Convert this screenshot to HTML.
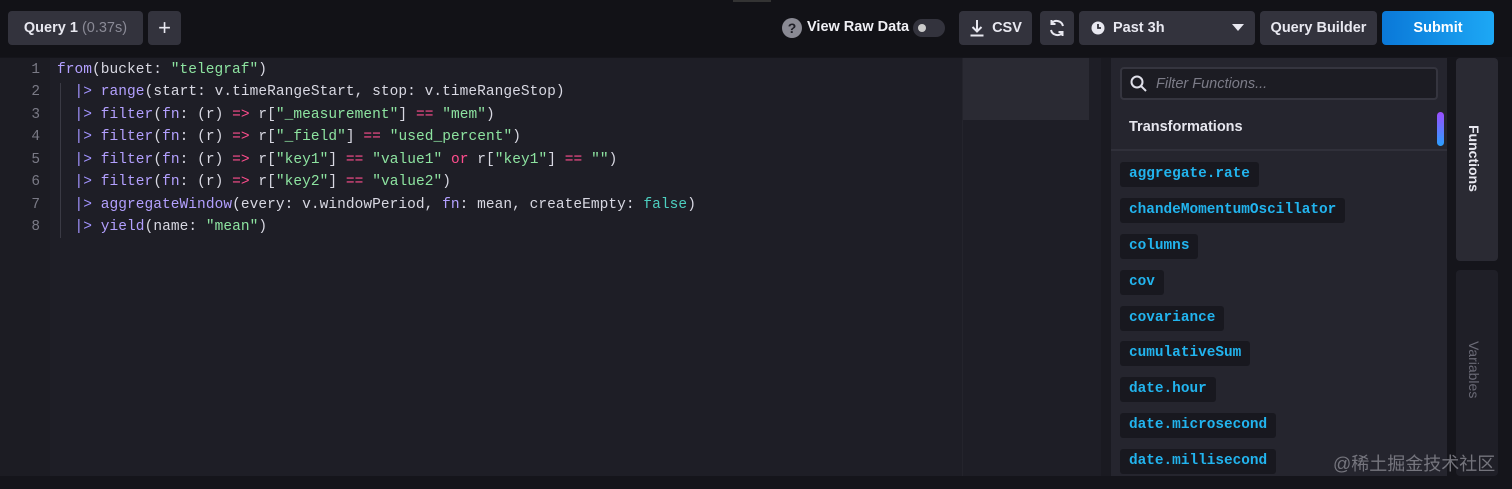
<!DOCTYPE html>
<html><head><meta charset="utf-8"><style>
*{margin:0;padding:0;box-sizing:border-box}
body{width:1512px;height:489px;background:#15151b;font-family:"Liberation Sans",sans-serif;position:relative;overflow:hidden;color:#e0e0ea}
.abs{position:absolute}
.btn{position:absolute;top:11px;height:34px;background:#33333d;border-radius:4px;color:#e8e8f0;font-size:14.5px;font-weight:bold;display:flex;align-items:center;justify-content:center}
.code{position:absolute;left:0;top:58px;width:1101px;height:418px;background:#1e1e26}
.gut{position:absolute;left:0;top:0;width:50px;height:418px;background:#1c1c23}
.ln{position:absolute;left:0;width:40px;text-align:right;font:14.4px "Liberation Mono",monospace;color:#7a7a86}
.cl{position:absolute;left:57px;font:14.5px "Liberation Mono",monospace;color:#d8d8e2;white-space:pre;letter-spacing:0.05px}
.f{color:#b3a0ff}.s{color:#8de3a0}.o{color:#ff4d8d}.p{color:#a293ff}.b{color:#4dd0c0}
.chip{position:absolute;left:1120px;height:25px;background:#18181f;border-radius:3px;padding:0 9px;font:bold 14.4px "Liberation Mono",monospace;color:#22b4ee;line-height:25px}
</style></head><body>
<div class="abs" style="left:0;top:0;width:1512px;height:57px;background:#121217"></div>
<div class="abs" style="left:733px;top:0;width:38px;height:2px;background:#333"></div>
<div class="btn" style="left:8px;width:135px;top:11px;font-weight:bold">Query 1&nbsp;<span style="color:#8a8a96;font-weight:normal">(0.37s)</span></div>
<div class="btn" style="left:148px;width:33px;font-size:22px;font-weight:normal">+</div>
<div class="abs" style="left:782px;top:18px;width:20px;height:20px;border-radius:50%;background:#8a8a94;color:#1e1e26;font-weight:bold;font-size:14px;text-align:center;line-height:20px">?</div>
<div class="abs" style="left:807px;top:19px;font-size:14.5px;font-weight:bold;color:#f0f0f5">View Raw Data</div>
<div class="abs" style="left:913px;top:19px;width:32px;height:18px;border-radius:9px;background:#33333d"><div style="position:absolute;left:5px;top:5px;width:8px;height:8px;border-radius:50%;background:#ccc"></div></div>
<div class="btn" style="left:959px;width:73px"><svg width="16" height="18" viewBox="0 0 16 18" style="margin-right:7px"><path d="M8 1v11M3.5 8l4.5 4.5 4.5-4.5M1.5 16.5h13" stroke="#e8e8f0" stroke-width="2" fill="none"/></svg>CSV</div>
<div class="btn" style="left:1040px;width:34px"><svg width="20" height="20" viewBox="0 0 20 20"><path d="M16 8A6.5 6.5 0 0 0 4.5 5.5M4 12a6.5 6.5 0 0 0 11.5 2.5M4.5 2v4h4M15.5 18v-4h-4" stroke="#e8e8f0" stroke-width="2" fill="none"/></svg></div>
<div class="btn" style="left:1079px;width:176px;justify-content:flex-start;padding-left:12px"><svg width="14" height="14" viewBox="0 0 14 14" style="margin-right:8px"><circle cx="7" cy="7" r="6.5" fill="#e8e8f0"/><path d="M7 3v4h3" stroke="#33333d" stroke-width="1.8" fill="none"/></svg>Past 3h<svg class="abs" style="left:153px;top:13px" width="12" height="8"><path d="M0 0h12L6 7z" fill="#e8e8f0"/></svg></div>
<div class="btn" style="left:1260px;width:117px">Query Builder</div>
<div class="btn" style="left:1382px;width:112px;background:linear-gradient(90deg,#0a78d8,#1da8f5);color:#fff">Submit</div>

<div class="code"><div class="gut"></div>
<div class="abs" style="top:25px;width:1px;height:155px;background:#3a3a44;left:60px"></div>
<div class="abs" style="left:962px;top:0;width:1px;height:418px;background:#24242c"></div>
<div class="abs" style="left:963px;top:0;width:126px;height:62px;background:#2a2a33"></div>
</div>
<div class="ln" style="top:62px">1</div><div class="ln" style="top:84px">2</div><div class="ln" style="top:107px">3</div><div class="ln" style="top:129px">4</div><div class="ln" style="top:152px">5</div><div class="ln" style="top:174px">6</div><div class="ln" style="top:197px">7</div><div class="ln" style="top:219px">8</div>
<div class="cl" style="top:62px"><span class="f">from</span>(bucket: <span class="s">"telegraf"</span>)</div>
<div class="cl" style="top:84px">  <span class="p">|&gt;</span> <span class="f">range</span>(start: v.timeRangeStart, stop: v.timeRangeStop)</div>
<div class="cl" style="top:107px">  <span class="p">|&gt;</span> <span class="f">filter</span>(<span class="f">fn</span>: (r) <span class="o">=&gt;</span> r[<span class="s">"_measurement"</span>] <span class="o">==</span> <span class="s">"mem"</span>)</div>
<div class="cl" style="top:129px">  <span class="p">|&gt;</span> <span class="f">filter</span>(<span class="f">fn</span>: (r) <span class="o">=&gt;</span> r[<span class="s">"_field"</span>] <span class="o">==</span> <span class="s">"used_percent"</span>)</div>
<div class="cl" style="top:152px">  <span class="p">|&gt;</span> <span class="f">filter</span>(<span class="f">fn</span>: (r) <span class="o">=&gt;</span> r[<span class="s">"key1"</span>] <span class="o">==</span> <span class="s">"value1"</span> <span class="o">or</span> r[<span class="s">"key1"</span>] <span class="o">==</span> <span class="s">""</span>)</div>
<div class="cl" style="top:174px">  <span class="p">|&gt;</span> <span class="f">filter</span>(<span class="f">fn</span>: (r) <span class="o">=&gt;</span> r[<span class="s">"key2"</span>] <span class="o">==</span> <span class="s">"value2"</span>)</div>
<div class="cl" style="top:197px">  <span class="p">|&gt;</span> <span class="f">aggregateWindow</span>(every: v.windowPeriod, <span class="f">fn</span>: mean, createEmpty: <span class="b">false</span>)</div>
<div class="cl" style="top:219px">  <span class="p">|&gt;</span> <span class="f">yield</span>(name: <span class="s">"mean"</span>)</div>

<div class="abs" style="left:1101px;top:58px;width:10px;height:418px;background:#1a1a21"></div>
<div class="abs" style="left:1111px;top:58px;width:336px;height:418px;background:#25252e"></div>
<div class="abs" style="left:1120px;top:67px;width:318px;height:33px;background:#1c1c23;border:2px solid #35353f;border-radius:4px"></div>
<svg class="abs" style="left:1130px;top:75px" width="18" height="18" viewBox="0 0 18 18"><circle cx="7" cy="7" r="5.5" stroke="#e0e0ea" stroke-width="2" fill="none"/><path d="M11 11l5 5" stroke="#e0e0ea" stroke-width="2"/></svg>
<div class="abs" style="left:1156px;top:76px;font-size:14.5px;font-style:italic;color:#7c7c88">Filter Functions...</div>
<div class="abs" style="left:1129px;top:119px;font-size:14.5px;font-weight:bold;color:#e6e6ee">Transformations</div>
<div class="abs" style="left:1437px;top:112px;width:7px;height:34px;border-radius:4px;background:linear-gradient(#9b4dff,#2aa0ff)"></div>
<div class="abs" style="left:1111px;top:149px;width:336px;height:2px;background:#30303a"></div>
<div class="chip" style="top:162px">aggregate.rate</div>
<div class="chip" style="top:198px">chandeMomentumOscillator</div>
<div class="chip" style="top:234px">columns</div>
<div class="chip" style="top:270px">cov</div>
<div class="chip" style="top:306px">covariance</div>
<div class="chip" style="top:341px">cumulativeSum</div>
<div class="chip" style="top:377px">date.hour</div>
<div class="chip" style="top:413px">date.microsecond</div>
<div class="chip" style="top:449px">date.millisecond</div>
<div class="abs" style="left:1456px;top:58px;width:42px;height:203px;background:#2a2a33;border-radius:4px"></div>
<div class="abs" style="left:1456px;top:270px;width:42px;height:206px;background:#1f1f27;border-radius:4px"></div>
<div class="abs" style="left:1466px;top:125px;writing-mode:vertical-rl;font-size:14px;font-weight:bold;color:#e8e8f0">Functions</div>
<div class="abs" style="left:1466px;top:341px;writing-mode:vertical-rl;font-size:14px;color:#6a6a76">Variables</div>
<div class="abs" style="left:1333px;top:450px;font:18px 'Liberation Sans','Noto Sans CJK SC',sans-serif;color:#8a8a92;opacity:.8">@稀土掘金技术社区</div>
</body></html>
